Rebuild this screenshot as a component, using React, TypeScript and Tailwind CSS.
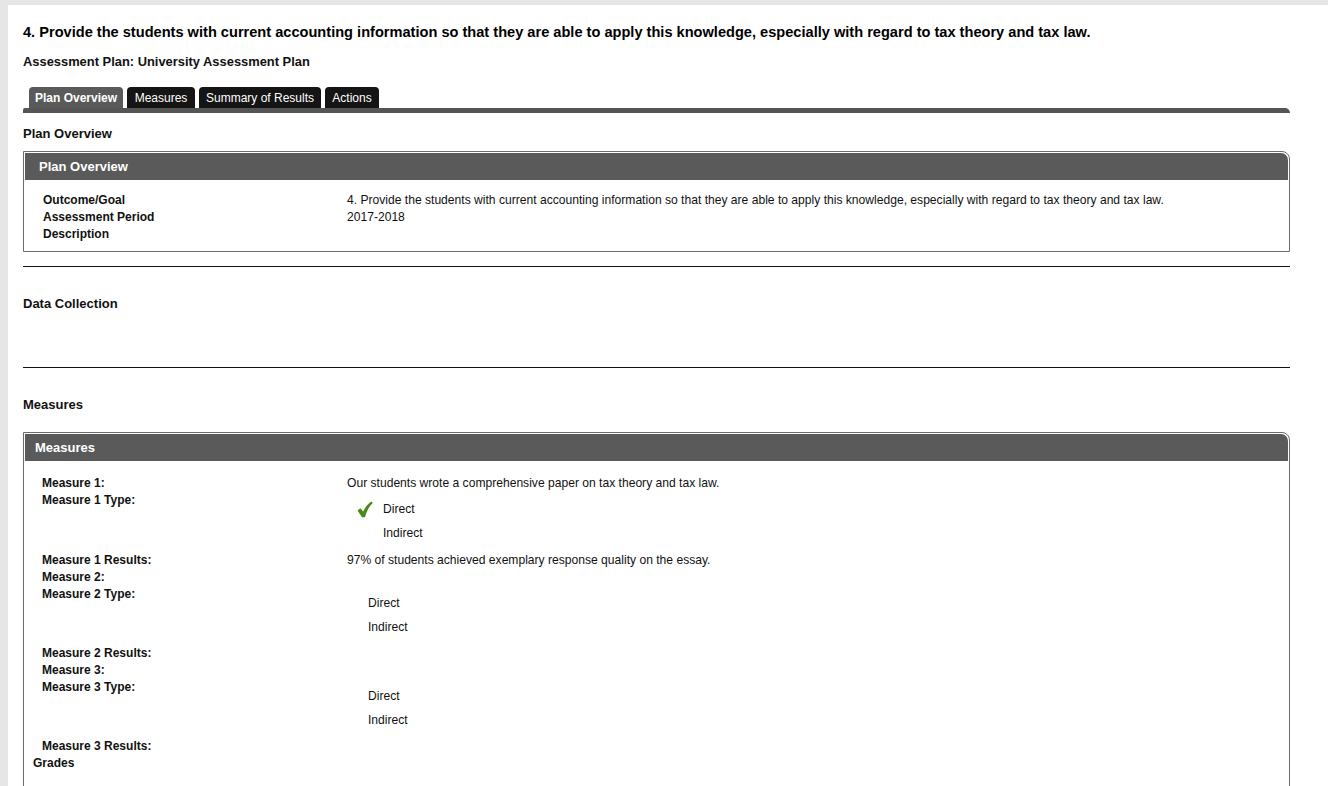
import React from "react";

const font = { fontFamily: '"Liberation Sans", Arial, sans-serif' };

function Check() {
  return (
    <svg width="16" height="17" viewBox="0 0 16 17" className="block">
      <path
        d="M0.5 9.4 L3.4 7.2 L6.1 10.6 C8.1 6.6 10.6 3.2 14.4 0.6 L15.8 2 C12.2 5.4 9.8 9.6 8 16.3 L5 16.3 Z"
        fill="#4a8a1c"
      />
    </svg>
  );
}

function Tab({ label, active, w }: { label: string; active?: boolean; w: string }) {
  return (
    <div
      className={
        "h-[21px] flex items-center justify-center rounded-t-[4px] text-white text-[12px] leading-none whitespace-nowrap " +
        w +
        " " +
        (active ? "bg-[#5a5a5a] font-bold" : "bg-[#151515]")
      }
    >
      {label}
    </div>
  );
}

function Panel({ title, titlePad, children }: { title: string; titlePad: string; children: React.ReactNode }) {
  return (
    <div className="border border-[#6b6b6b] rounded-tr-[8px] p-px">
      <div className={"h-[27px] bg-[#5a5a5a] rounded-tr-[7px] flex items-center text-white font-bold text-[13px] " + titlePad}>
        {title}
      </div>
      {children}
    </div>
  );
}

function Row({ label, children, h = "h-[17px]", lw = "w-[304px]" }: { label: string; children?: React.ReactNode; h?: string; lw?: string }) {
  return (
    <div className={"flex " + h}>
      <div className={lw + " shrink-0 h-[17px] leading-[17px] font-bold"}>{label}</div>
      <div className="flex-1 font-normal leading-[17px] text-[12.1px]">{children}</div>
    </div>
  );
}

function TypeList({ checked, first }: { checked?: boolean; first: string }) {
  return (
    <div className={first}>
      <div className="flex items-center h-[17px] leading-[17px]">
        {checked ? (
          <div className="ml-[10px] w-[26px] shrink-0">
            <Check />
          </div>
        ) : (
          <div className="w-[21px] shrink-0" />
        )}
        <span>Direct</span>
      </div>
      <div className="flex items-center h-[17px] leading-[17px] mt-[7px]">
        <div className={checked ? "w-[36px] shrink-0" : "w-[21px] shrink-0"} />
        <span>Indirect</span>
      </div>
    </div>
  );
}

export default function App() {
  return (
    <div className="min-h-screen bg-[#e6e6e6] pl-[8px] pt-[5px] text-[#111]" style={font}>
      <div className="bg-white min-h-[781px] pl-[15px] pr-[38px] overflow-hidden">
        <div className="pt-[18px] h-[36px]">
          <div className="text-[14.6px] leading-[18px] font-bold text-black">
            4. Provide the students with current accounting information so that they are able to apply this knowledge, especially with regard to tax theory and tax law.
          </div>
        </div>
        <div className="mt-[13px] text-[12.9px] leading-[16px] font-bold">Assessment Plan: University Assessment Plan</div>
        <div className="mt-[17px] w-[1267px]">
          <div className="flex gap-[4px] pl-[6px]">
            <Tab label="Plan Overview" active w="w-[94px]" />
            <Tab label="Measures" w="w-[68px]" />
            <Tab label="Summary of Results" w="w-[122px]" />
            <Tab label="Actions" w="w-[54px]" />
          </div>
          <div className="h-[5px] bg-[#555555] rounded-tr-[5px] rounded-tl-[2px]" />
        </div>
        <div className="mt-[13px] text-[13px] leading-[16px] font-bold">Plan Overview</div>
        <div className="mt-[9px] w-[1267px]">
          <Panel title="Plan Overview" titlePad="pl-[14px]">
            <div className="pl-[18px] pt-[12px] pb-[7px] text-[12px]">
              <Row label="Outcome/Goal">
                4. Provide the students with current accounting information so that they are able to apply this knowledge, especially with regard to tax theory and tax law.
              </Row>
              <Row label="Assessment Period">2017-2018</Row>
              <Row label="Description" />
            </div>
          </Panel>
        </div>
        <div className="mt-[14px] w-[1267px] h-px bg-[#111]" />
        <div className="mt-[29px] text-[13px] leading-[16px] font-bold">Data Collection</div>
        <div className="mt-[55px] w-[1267px] h-px bg-[#111]" />
        <div className="mt-[29px] text-[13px] leading-[16px] font-bold">Measures</div>
        <div className="mt-[19px] w-[1267px]">
          <Panel title="Measures" titlePad="pl-[10px]">
            <div className="pt-[14px] pb-[20px] text-[12px] h-[400px]">
              <div className="pl-[17px]">
                <Row label="Measure 1:" lw="w-[305px]">
                  Our students wrote a comprehensive paper on tax theory and tax law.
                </Row>
                <Row label="Measure 1 Type:" lw="w-[305px]" h="h-[60px]">
                  <TypeList checked first="pt-[9px]" />
                </Row>
                <Row label="Measure 1 Results:" lw="w-[305px]">
                  97% of students achieved exemplary response quality on the essay.
                </Row>
                <Row label="Measure 2:" lw="w-[305px]" />
                <Row label="Measure 2 Type:" lw="w-[305px]" h="h-[59px]">
                  <TypeList first="pt-[9px]" />
                </Row>
                <Row label="Measure 2 Results:" lw="w-[305px]" />
                <Row label="Measure 3:" lw="w-[305px]" />
                <Row label="Measure 3 Type:" lw="w-[305px]" h="h-[59px]">
                  <TypeList first="pt-[9px]" />
                </Row>
                <Row label="Measure 3 Results:" lw="w-[305px]" />
              </div>
              <div className="pl-[8px] h-[16px] leading-[16px] font-bold">Grades</div>
            </div>
          </Panel>
        </div>
      </div>
    </div>
  );
}
